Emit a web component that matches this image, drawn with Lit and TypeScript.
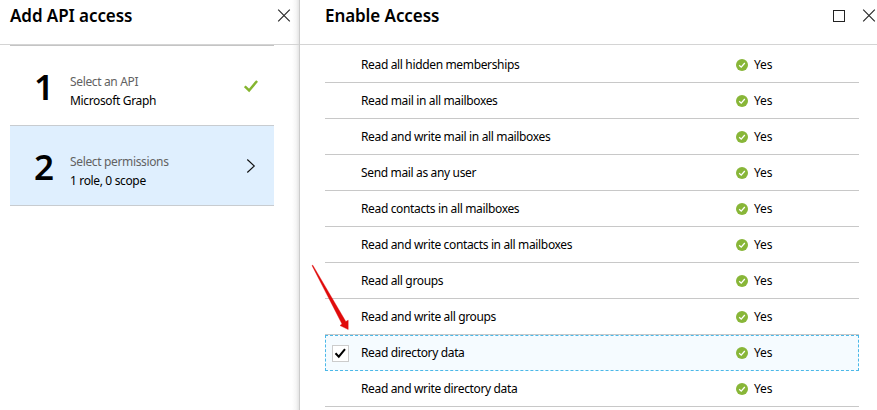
import { LitElement, html, css, svg } from "lit";
import { customElement } from "lit/decorators.js";
import { classMap } from "lit/directives/class-map.js";

interface Permission {
  name: string;
  checked?: boolean;
}

const PERMISSIONS: Permission[] = [
  { name: "Read all hidden memberships" },
  { name: "Read mail in all mailboxes" },
  { name: "Read and write mail in all mailboxes" },
  { name: "Send mail as any user" },
  { name: "Read contacts in all mailboxes" },
  { name: "Read and write contacts in all mailboxes" },
  { name: "Read all groups" },
  { name: "Read and write all groups" },
  { name: "Read directory data", checked: true },
  { name: "Read and write directory data" },
];

const closeIcon = html`<svg width="14" height="14" viewBox="0 0 14 14">
  ${svg`<path d="M1.2 .7L12.8 12.3M12.8 .7L1.2 12.3" fill="none" stroke="#222" stroke-width="1.1"/>`}
</svg>`;

@customElement("app-root")
export class AppRoot extends LitElement {
  static styles = css`
    :host {
      display: flex;
      position: relative;
      width: 877px;
      height: 410px;
      overflow: hidden;
      background: #fff;
      color: #000;
      font-family: "Noto Sans", "Open Sans", sans-serif;
      font-size: 12px;
      line-height: 18px;
      letter-spacing: -0.35px;
    }
    svg { display: block; }
    .steps {
      width: 299px;
      flex: none;
      background: linear-gradient(to left, #e4e4e4, #f6f6f6 3px, #fff 7px) right / 7px 100% no-repeat;
    }
    .blade {
      flex: 1;
      min-width: 0;
      border-left: 1px solid #ccc;
    }
    header {
      display: flex;
      align-items: center;
      box-sizing: border-box;
      height: 45px;
      padding: 0 8px 13px 10px;
      border-bottom: 1px solid #d4d4d4;
    }
    .blade header { padding: 0 1px 13px 25px; }
    h1 {
      flex: 1;
      margin: 0;
      font-size: 17px;
      line-height: 24px;
      font-weight: 600;
      letter-spacing: -0.08px;
    }
    .max { margin-right: 17px; }
    .list { margin: 0 25px 0 10px; border-top: 1px solid #c4c4c4; }
    .step {
      display: flex;
      align-items: center;
      box-sizing: border-box;
      height: 80px;
      padding: 0 16px 0 24px;
      border-bottom: 1px solid #c8ccd0;
    }
    .current { background: #dfeffe; }
    .number {
      width: 36px;
      padding-top: 2px;
      font-size: 35px;
      line-height: 40px;
      font-weight: 600;
      letter-spacing: 0;
    }
    .label { flex: 1; line-height: 19px; padding-top: 10px; }
    .hint { color: #626262; }
    .rows { margin: 2px 18px 0 25px; }
    .row {
      display: grid;
      grid-template-columns: 36px 375px 18px 1fr;
      align-items: center;
      box-sizing: border-box;
      height: 36px;
      border-bottom: 1px solid #c8c8c8;
    }
    .checked {
      border: 1px dashed #4bb8e8;
      background: #f5fbff;
      grid-template-columns: 35px 375px 18px 1fr;
    }
    .name, .yes { padding-top: 1px; }
    .checked .name, .checked .yes { padding-top: 0; }
    .yes { letter-spacing: -0.15px; }
    .box {
      display: grid;
      place-items: center;
      box-sizing: border-box;
      width: 17px;
      height: 17px;
      margin-left: 6px;
      border: 1px solid #ccc;
      background: #fff;
    }
    .pointer { position: absolute; left: 308px; top: 260px; }
  `;

  private renderRow(p: Permission) {
    return html`<div class=${classMap({ row: true, checked: !!p.checked })}>
      <span>${p.checked
        ? html`<span class="box"><svg width="13" height="13" viewBox="0 0 13 13">
            <path d="M1.5 6.2L4.8 9.7L11 2.2" fill="none" stroke="#000" stroke-width="2"/>
          </svg></span>`
        : null}</span>
      <span class="name">${p.name}</span>
      <svg width="12" height="12" viewBox="0 0 12 12">
        <circle cx="6" cy="6" r="6" fill="#88b638"/>
        <path d="M3.2 6.2L5.2 8.1L8.8 4" fill="none" stroke="#fff" stroke-width="1.3"/>
      </svg>
      <span class="yes">Yes</span>
    </div>`;
  }

  render() {
    return html`
      <section class="steps">
        <header><h1>Add API access</h1>${closeIcon}</header>
        <div class="list">
          <div class="step">
            <div class="number">1</div>
            <div class="label"><div class="hint">Select an API</div><div>Microsoft Graph</div></div>
            <svg width="14" height="14" viewBox="0 0 14 14">
              <path d="M.8 7.3L5.1 11.5L13.1 2" fill="none" stroke="#85b52f" stroke-width="2.5"/>
            </svg>
          </div>
          <div class="step current">
            <div class="number">2</div>
            <div class="label"><div class="hint">Select permissions</div><div>1 role, 0 scope</div></div>
            <svg width="14" height="14" viewBox="0 0 14 14">
              <path d="M3.3 .5L10.3 7L3.3 13.5" fill="none" stroke="#111" stroke-width="1.1"/>
            </svg>
          </div>
        </div>
      </section>
      <section class="blade">
        <header>
          <h1>Enable Access</h1>
          <svg class="max" width="12" height="12" viewBox="0 0 12 12">
            <rect x=".5" y=".5" width="11" height="11" fill="none" stroke="#222"/>
          </svg>
          ${closeIcon}
        </header>
        <div class="rows">${PERMISSIONS.map((p) => this.renderRow(p))}</div>
      </section>
      <svg class="pointer" width="44" height="72" viewBox="0 0 44 72">
        <path d="M4 5.5L4.8 5.2L37.8 61.5L40.2 60.2L40.2 69.5L32 65.5L34 64Z" fill="#e00b0b" stroke="#e00b0b" stroke-width=".4"/>
      </svg>
    `;
  }
}
